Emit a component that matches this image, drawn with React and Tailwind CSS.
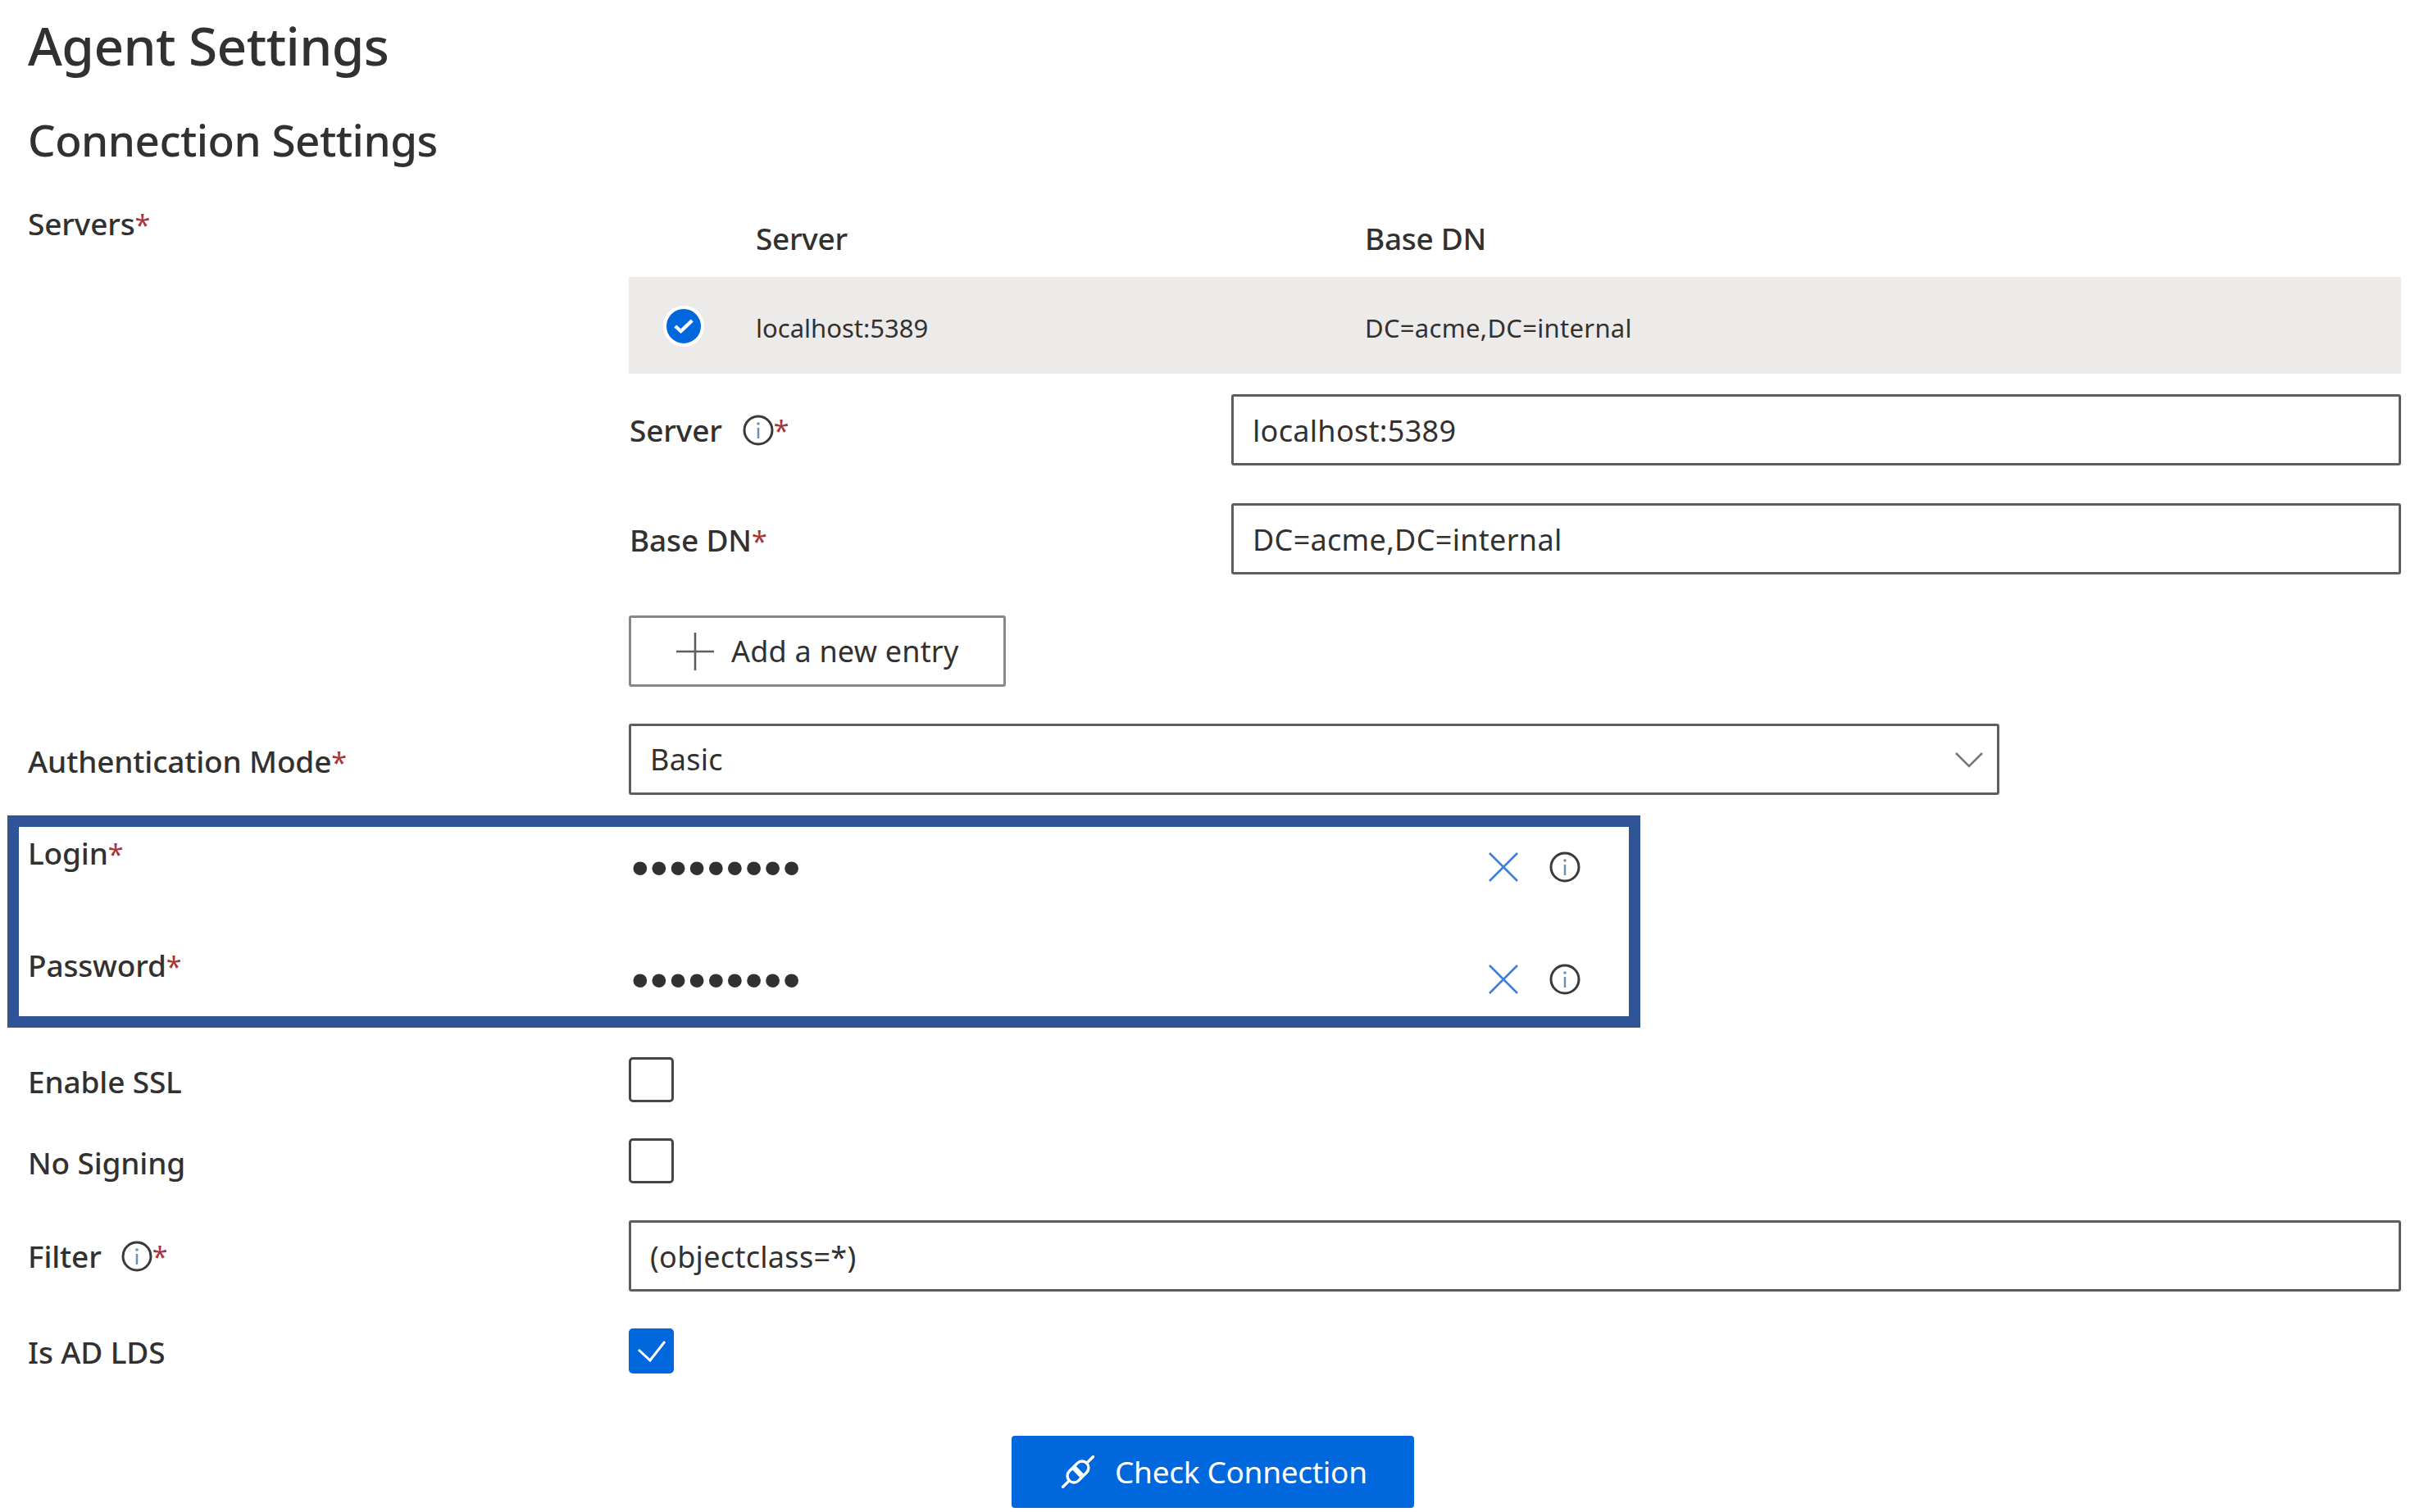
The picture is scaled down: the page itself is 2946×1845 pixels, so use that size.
import React from "react";

const Info = ({ className = "" }) => (
  <svg viewBox="0 0 38 38" className={`w-[38px] h-[38px] shrink-0 ${className}`} fill="none">
    <circle cx="19" cy="19" r="17" stroke="#3b3a39" strokeWidth="3" />
    <circle cx="19" cy="11" r="1.8" fill="#6f8fb0" />
    <path d="M19 16v13" stroke="#6f8fb0" strokeWidth="2.5" />
  </svg>
);

const Close = () => (
  <svg viewBox="0 0 36 36" className="w-[36px] h-[36px] shrink-0" fill="none">
    <path d="M1 1l34 34M35 1L1 35" stroke="#3f7fdc" strokeWidth="2.6" />
  </svg>
);

const Star = () => <span className="text-[#a4373a] text-[34px] font-normal">*</span>;

const Label = ({ children, className = "" }) => (
  <div className={`text-[37px] leading-[48px] font-medium tracking-[-0.15px] text-[#323130] ${className}`}>{children}</div>
);

const TextBox = ({ children, className = "" }) => (
  <div className={`h-[87px] flex items-center pl-[23px] bg-white border-[3px] border-[#605e5c] rounded-[3px] text-[36px] tracking-[0.3px] text-[#323130] ${className}`}>
    {children}
  </div>
);

const Check = ({ checked }) =>
  checked ? (
    <div className="w-[55px] h-[55px] rounded-[5px] bg-[#0067dc] flex items-center justify-center">
      <svg viewBox="0 0 55 55" className="w-[55px] h-[55px]" fill="none">
        <path d="M12 26l14 13L44 16" stroke="#fff" strokeWidth="3" />
      </svg>
    </div>
  ) : (
    <div className="w-[55px] h-[55px] rounded-[5px] border-[3px] border-[#484644] bg-white" />
  );

const Secret = ({ className = "" }) => (
  <div className={`flex items-center h-[56px] pl-[736px] ${className}`}>
    <span className="w-[1046px] font-['Liberation_Sans',sans-serif] text-[62px] tracking-[1.4px] text-[#323130]">•••••••••</span>
    <Close />
    <Info className="ml-[38px]" />
  </div>
);

export default function App() {
  return (
    <div className="w-[2946px] h-[1845px] overflow-hidden bg-white pl-[34px] pt-[14px] text-[#323130] font-['Noto_Sans',sans-serif]">
      <h1 className="h-[84px] flex items-center text-[64px] leading-[84px] font-medium tracking-[-0.6px]">Agent Settings</h1>
      <h2 className="mt-[38px] h-[70px] flex items-center text-[53px] leading-[70px] font-medium tracking-[-0.5px]">Connection Settings</h2>

      <div className="flex">
        <Label className="w-[733px] mt-[43px]">
          Servers<Star />
        </Label>
        <div className="w-[2162px] mt-[64px]">
          <div className="flex h-[68px] items-center pb-[26px] text-[37px] font-medium tracking-[-0.3px]">
            <span className="ml-[155px] w-[743px]">Server</span>
            <span>Base DN</span>
          </div>
          <div className="flex items-center h-[118px] bg-[#edebe9] text-[31px]">
            <div className="ml-[42px] mt-[2px] w-[50px] h-[50px] rounded-full bg-[#0067dc] border-[4px] border-white flex items-center justify-center">
              <svg viewBox="0 0 28 22" className="w-[24px] h-[20px]" fill="none">
                <path d="M2 11l8 7L26 3" stroke="#fff" strokeWidth="5" />
              </svg>
            </div>
            <span className="ml-[63px] w-[743px] pt-[6px]">localhost:5389</span>
            <span className="pt-[6px] tracking-[0.3px]">DC=acme,DC=internal</span>
          </div>
          <div className="flex items-center mt-[25px]">
            <Label className="w-[735px] flex items-center pl-[1px]">
              Server
              <Info className="ml-[25px]" />
              <Star />
            </Label>
            <TextBox className="flex-1 pt-[3px]">localhost:5389</TextBox>
          </div>
          <div className="flex items-center mt-[46px]">
            <Label className="w-[735px] pt-[4px] pl-[1px]">
              Base DN<Star />
            </Label>
            <TextBox className="flex-1 pt-[3px]">DC=acme,DC=internal</TextBox>
          </div>
          <div className="mt-[50px] w-[460px] h-[87px] flex items-center bg-white border-[3px] border-[#8a8886] rounded-[3px] text-[36px] tracking-[0.2px]">
            <svg viewBox="0 0 46 46" className="ml-[55px] w-[46px] h-[46px]" fill="none">
              <path d="M23 0v46M0 23h46" stroke="#605e5c" strokeWidth="2.6" />
            </svg>
            <span className="ml-[21px]">Add a new entry</span>
          </div>
        </div>
      </div>

      <div className="flex items-center mt-[45px]">
        <Label className="w-[733px] pt-[6px]">
          Authentication Mode<Star />
        </Label>
        <TextBox className="w-[1672px] justify-between pr-[16px]">
          <span>Basic</span>
          <svg viewBox="0 0 36 20" className="w-[36px] h-[20px]" fill="none">
            <path d="M2 2l16 16L34 2" stroke="#7a7876" strokeWidth="2.6" />
          </svg>
        </TextBox>
      </div>

      <div className="-ml-[25px] mt-[25px] w-[1992px] h-[259px] border-[14px] border-[#2f5597] pl-[11px] bg-white">
        <Label className="pt-[8px]">
          Login<Star />
        </Label>
        <Secret className="-mt-[36px]" />
        <Label className="mt-[68px]">
          Password<Star />
        </Label>
        <Secret className="-mt-[36px]" />
      </div>

      <div className="flex items-center mt-[36px]">
        <Label className="w-[733px] pt-[4px]">Enable SSL</Label>
        <Check />
      </div>
      <div className="flex items-center mt-[44px]">
        <Label className="w-[733px] pt-[4px]">No Signing</Label>
        <Check />
      </div>
      <div className="flex items-center mt-[45px]">
        <Label className="w-[733px] flex items-center">
          Filter
          <Info className="ml-[24px]" />
          <Star />
        </Label>
        <TextBox className="w-[2162px] pt-[3px]">(objectclass=*)</TextBox>
      </div>
      <div className="flex items-center mt-[45px]">
        <Label className="w-[733px] pt-[2px]">Is AD LDS</Label>
        <Check checked />
      </div>

      <div className="ml-[1200px] mt-[76px] w-[491px] h-[88px] flex items-center bg-[#0067dc] rounded-[4px] text-white text-[37px] tracking-[-0.3px]">
        <svg viewBox="0 0 40 40" className="ml-[61px] w-[40px] h-[40px]" fill="none">
          <g transform="rotate(45 20 20)" stroke="#fff" strokeWidth="3.4" strokeLinecap="round">
            <path d="M12 18.5V13a8 8 0 0 1 16 0v5.500zM12 21.500V27a8 8 0 0 0 16 0v-5.500z" />
            <path d="M20 5V-8M20 35v13" />
          </g>
        </svg>
        <span className="ml-[25px]">Check Connection</span>
      </div>
    </div>
  );
}
